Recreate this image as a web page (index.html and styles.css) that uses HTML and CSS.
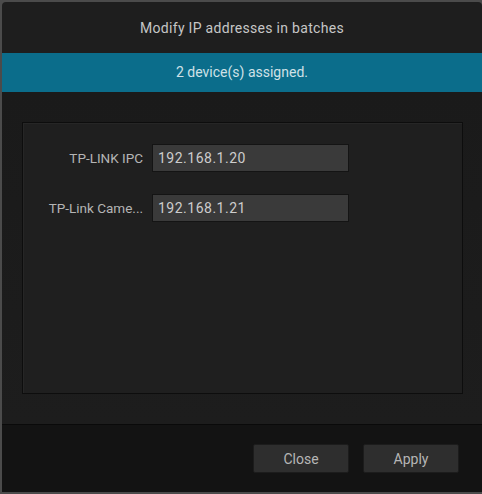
FILE: index.html
```html
<!DOCTYPE html>
<html lang="en">
<head>
    <meta charset="UTF-8">
    <meta name="viewport" content="width=device-width, initial-scale=1.0">
    <title>Modify IP addresses in batches</title>
    <link rel="stylesheet" href="styles.css">
</head>
<body>
    <div class="dialog">
        <div class="dialog-title">Modify IP addresses in batches</div>
        <div class="banner">2 device(s) assigned.</div>
        <div class="dialog-body">
            <div class="panel">
                <div class="ip-grid">
                    <label class="ip-label">TP-LINK IPC</label>
                    <input class="ip-input" type="text" value="192.168.1.20">
                    <label class="ip-label">TP-Link Came...</label>
                    <input class="ip-input" type="text" value="192.168.1.21">
                </div>
            </div>
        </div>
        <div class="dialog-footer">
            <button type="button" class="btn">Close</button>
            <button type="button" class="btn">Apply</button>
        </div>
    </div>
</body>
</html>
```

FILE: styles.css
```css
body {
    margin: 0;
    padding: 0;
    background-color: #4b4b4b;
    font-family: Roboto, "Noto Sans", sans-serif;
    font-size: 14px;
}
.dialog {
    margin: 2px 0 2px 2px;
    width: 480px;
    height: 490px;
    background: #1e1e1e;
    border-radius: 4px 4px 0 0;
    display: flex;
    flex-direction: column;
}
.dialog-title {
    height: 51px;
    line-height: 52px;
    text-align: center;
    color: #c6c6c6;
    letter-spacing: 0.3px;
}
.banner {
    height: 39px;
    line-height: 39px;
    text-align: center;
    background: #0b6d8b;
    color: #cfe1e7;
}
.dialog-body {
    padding: 30px 19px 29px 20px;
    flex: 1;
    background: linear-gradient(#1a1a1a, #1d1d1d);
}
.panel {
    box-sizing: border-box;
    height: 272px;
    border: 1px solid #0d0d0d;
    box-shadow: inset 1px 1px 0 #262626;
    background: #1f1f1f;
    padding-top: 21px;
}
.ip-grid {
    display: grid;
    grid-template-columns: 120px 197px;
    column-gap: 9px;
    row-gap: 22px;
    align-items: center;
}
.ip-label {
    text-align: right;
    color: #b4b4b4;
    font-size: 13.5px;
}
.ip-input {
    box-sizing: border-box;
    width: 197px;
    height: 28px;
    background: #3a3a3a;
    border: 1px solid #141414;
    color: #cdcdcd;
    font-family: inherit;
    font-size: 14px;
    letter-spacing: 0.5px;
    padding: 0 5px;
    outline: none;
}
.dialog-footer {
    height: 68px;
    border-top: 1px solid #0a0a0a;
    background: #131313;
    display: flex;
    justify-content: flex-end;
    align-items: flex-start;
    gap: 14px;
    padding: 19px 23px 0 0;
    box-sizing: border-box;
}
.btn {
    width: 96px;
    height: 29px;
    background: #2e2e2e;
    border: 1px solid #1c1c1c;
    border-radius: 2px;
    color: #b6b6b6;
    font-family: inherit;
    font-size: 14px;
    cursor: pointer;
}
```
